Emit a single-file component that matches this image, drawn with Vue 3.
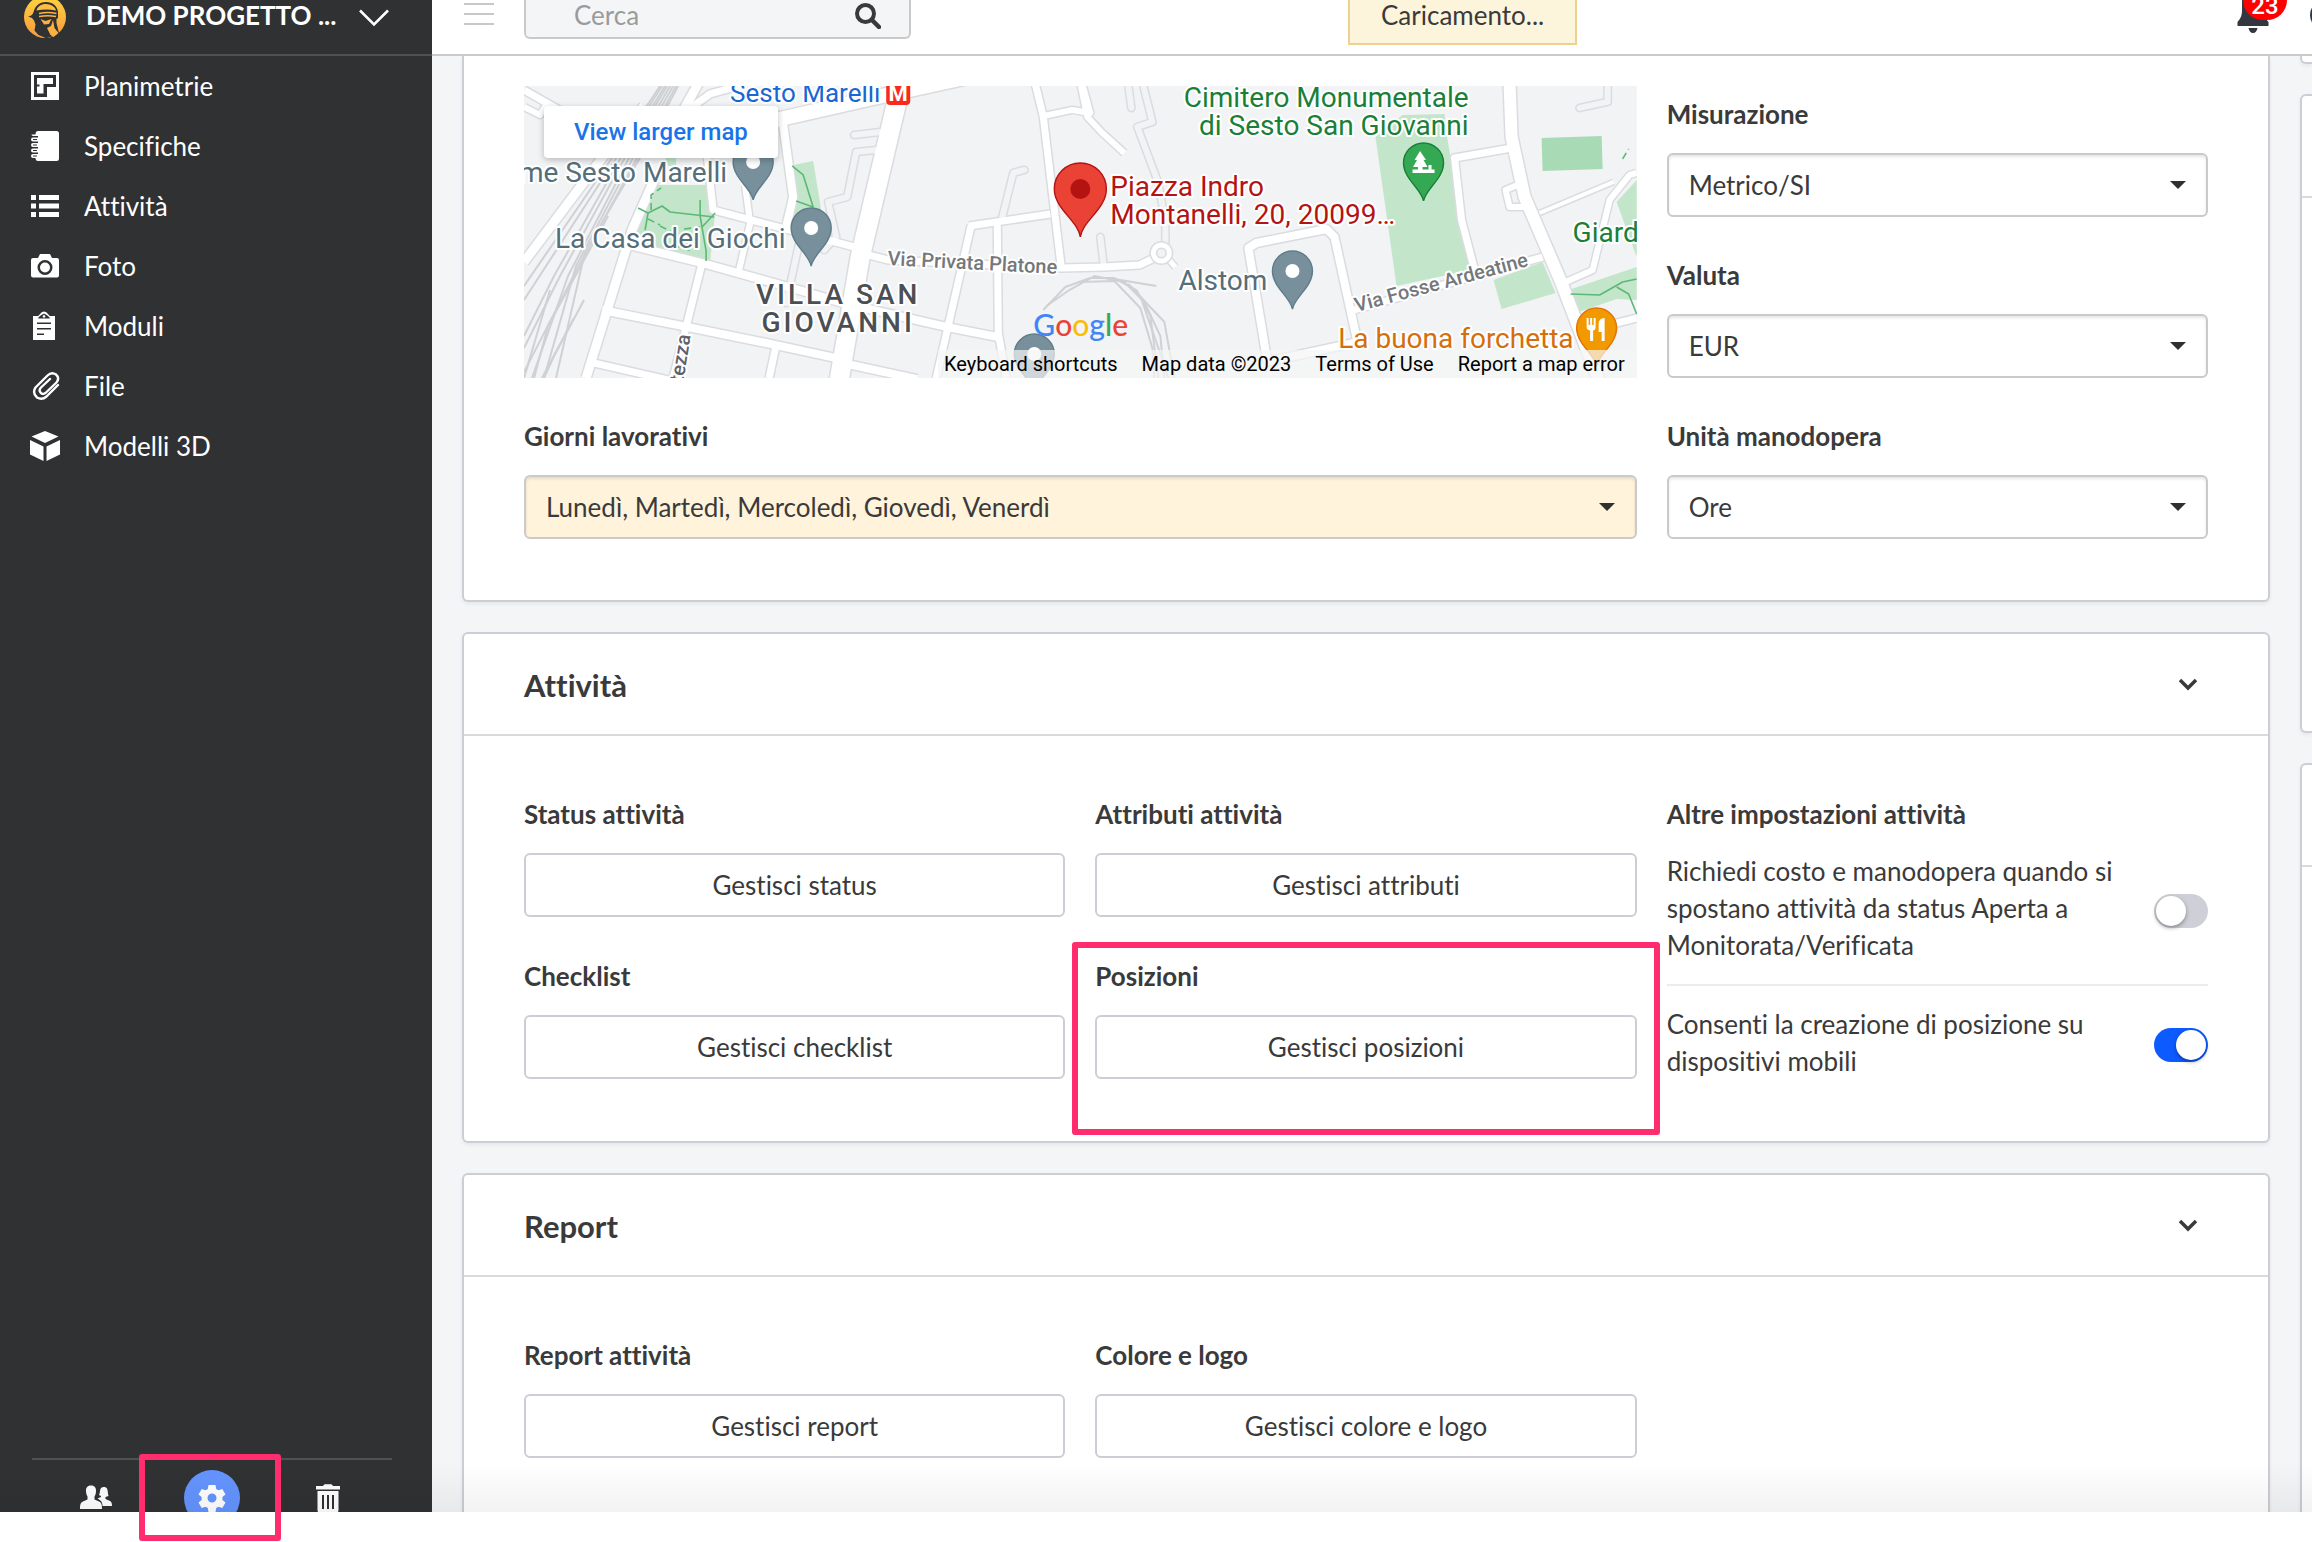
<template>
  <div class="page">
    <div class="app">
      <aside class="sidebar">
        <button class="project" type="button">
          <svg class="logo" viewBox="0 0 42 42" aria-hidden="true">
            <defs>
              <linearGradient id="logoFill" x1="0" y1="0" x2="0" y2="1">
                <stop offset="0" stop-color="#ffd33f" />
                <stop offset="1" stop-color="#f79a3e" />
              </linearGradient>
            </defs>
            <circle cx="21" cy="21" r="21" fill="url(#logoFill)" />
            <path d="M4 20.500c3-.5 5-1.500 6-6C12 9 16 6 22 6c6.500 0 11.500 4 12 10v6l-1.500 1v4l2.500 10-5 3-7 2h-1.500l-2-1-5-2-4-4.500 1-6-1.500-4-2-2.500z" fill="#303133" />
            <path d="M12.500 14.500c1-4 4.500-6.500 9.500-6.500s9.500 3 10 6.500c-6-1.200-13-1.200-19.500 0z" fill="#fdbd42" />
            <path d="M15 17.500c6-1.200 12-1.200 17.500 0M15 20.500c6-1 12-1 17 0" fill="none" stroke="#fbb540" stroke-width="1.500" />
            <path d="M16.500 23l5 2 6-2-2.500 5-5 .5zM23 32l4-2 2-6 1.500 8 4 5-5 4-3-2z" fill="#fbb040" />
          </svg>
          <span class="project-name">DEMO PROGETTO ...</span>
          <svg class="project-caret" viewBox="0 0 30 18" aria-hidden="true">
            <path d="M1 1.500L15 15.500L29 1.500" fill="none" stroke="#fff" stroke-width="2.500" />
          </svg>
        </button>

        <nav class="menu">
          <a v-for="item in menu" :key="item.label" class="menu-item" href="#">
            <svg class="menu-icon" viewBox="0 0 30 30" aria-hidden="true">
              <path v-if="item.line" :d="item.path" fill="none" stroke="#fff" stroke-width="2.400" stroke-linecap="round" stroke-linejoin="round" />
              <path v-else :d="item.path" fill="#fff" fill-rule="evenodd" />
            </svg>
            <span>{{ item.label }}</span>
          </a>
        </nav>

        <div class="tools">
          <button class="tool" type="button" aria-label="Utenti">
            <svg width="32" height="26" viewBox="0 0 32 26">
              <path d="M21 3c1.500-1.500 5-1.500 6 .5 1 2 .8 5.500 1.500 7.500l-3 1v2l4.500 2c1.500.8 2 2.500 2 5h-9.500c0-4-1.500-5.500-5-7.500l3.500-1.500v-1l-2-1c1.300-2 .7-5.500 2-7z" fill="#fff" />
              <path d="M6 5.500C6 2 8 .5 11 .5s5 1.500 5 5c0 3-.5 4.500-1.500 6v3l4.500 2c2.500 1 3 3 3 7.500H0c0-4.500.5-6.500 3-7.500l4.500-2v-3C6.500 10 6 8.500 6 5.500z" fill="#fff" />
            </svg>
          </button>
          <button class="tool tool-active" type="button" aria-label="Impostazioni">
            <svg width="28" height="28" viewBox="0 0 28 28">
              <path d="M10.500 1h7l.7 4 2.300 1.300 3.800-1.400 3.200 5.700-3.100 2.500v2.800l3.100 2.500-3.200 5.700-3.800-1.400-2.300 1.300-.7 4h-7l-.7-4-2.300-1.300-3.800 1.400-3.200-5.700 3.100-2.500v-2.800L.5 10.600l3.200-5.700 3.800 1.400L9.800 5zM14 9.500a4.500 4.500 0 1 0 0 9 4.500 4.500 0 1 0 0-9z" fill="#fff" fill-rule="evenodd" />
            </svg>
          </button>
          <button class="tool" type="button" aria-label="Cestino">
            <svg width="26" height="29" viewBox="0 0 26 29">
              <path d="M1 2h7l1.500-1.800h7L18 2h7v3.500H1zM2.500 7h21v19q0 3-3 3h-15q-3 0-3-3zM7 11v14h2V11zM12 11v14h2V11zM17 11v14h2V11z" fill="#fff" fill-rule="evenodd" />
            </svg>
          </button>
        </div>
      </aside>

      <div class="content">
        <header class="topbar">
          <button class="burger" type="button" aria-label="Menu">
            <i></i><i></i><i></i>
          </button>
          <div class="search">
            <input type="text" placeholder="Cerca" aria-label="Cerca" />
            <svg class="search-icon" viewBox="0 0 26 26" aria-hidden="true">
              <circle cx="10.500" cy="10.500" r="8.500" fill="none" stroke="#3a3a3a" stroke-width="4" />
              <path d="M17 17l7 7" stroke="#3a3a3a" stroke-width="4.500" stroke-linecap="round" />
            </svg>
          </div>
          <div class="loading">Caricamento...</div>
          <button class="bell" type="button" aria-label="Notifiche">
            <svg width="32" height="34" viewBox="0 0 32 34">
              <path d="M5 0h22v10c0 5 1 8 4.500 12v4H.5v-4C4 18 5 15 5 10zM11.500 28h9q-1 5-4.500 5t-4.500-5z" fill="#343741" />
            </svg>
            <span class="badge">23</span>
          </button>
          <span class="avatar"></span>
        </header>

        <main class="board">
          <div class="column">
            <section class="card card-cut">
              <div class="card-body">
                <div class="map">
                  <svg class="map-canvas" viewBox="0 0 1112 292" preserveAspectRatio="xMidYMid slice">
                    <rect width="1112" height="292" fill="#f1f3f4" />
                    <g fill="#c3e6cb">
                      <path v-for="d in parks" :key="d" :d="d" />
                      <path d="M1017 52L1077 50L1078 83L1018 85z" fill="#a8dab5" />
                    </g>
                    <g fill="none" stroke-linejoin="round">
                      <path v-for="d in rails" :key="d" :d="d" stroke="#cfd1d4" stroke-width="2" />
                      <path v-for="d in lanes" :key="d" :d="d" stroke="#dadce0" stroke-width="9" stroke-linecap="round" />
                      <path v-for="r in roads" :key="r.d" :d="r.d" stroke="#dadce0" :stroke-width="r.w + 3" />
                      <path v-for="d in lanes" :key="d + 'in'" :d="d" stroke="#f1f3f4" stroke-width="6" stroke-linecap="round" />
                      <path v-for="r in roads" :key="r.d + 'in'" :d="r.d" stroke="#fff" :stroke-width="r.w" />
                      <path v-for="d in trails" :key="d" :d="d" stroke="#5bb974" stroke-width="1.600" />
                      <path d="M141 98l7-14M127 124v-15l10-7M124 133l12 6M138 156l30 9M136 140l12 6M1098 73l6-10M160 143l16-2" stroke="#5bb974" stroke-width="1.600" stroke-dasharray="7 4" />
                      <circle cx="637" cy="167" r="8" stroke="#dadce0" stroke-width="8" />
                      <circle cx="637" cy="167" r="8" stroke="#fff" stroke-width="5" />
                    </g>
                    <g v-for="p in pins" :key="p.x" :transform="`translate(${p.x} ${p.y})`">
                      <path d="M0 58C-2 46-20 36-20 20a20 20 0 0 1 40 0C20 36 2 46 0 58z" :fill="p.fill" :stroke="p.edge" stroke-width="1.400" />
                      <circle v-if="p.kind === 'dot'" cx="0" cy="20" r="7" fill="#fff" />
                      <path v-if="p.kind === 'tree'" d="M-3.500 8l6 9h-2.500l4 7h-5v2.500h6V22h3v4.500h3V30H-11v-3.500h5.500V24h-5l4-7H-9z" fill="#fff" />
                      <path v-if="p.kind === 'food'" d="M-10 10h2v7h1.500v-7h2v7H-3v-7h2v9q0 3-2.500 3.500V33h-3V22.500Q-10 22-10 19zM8 10v23H5v-9H2v-8q0-6 6-6z" fill="#fff" />
                    </g>
                    <g transform="translate(556 77)">
                      <path d="M0 74C-2 58-26 46-26 26a26 26 0 0 1 52 0C26 46 2 58 0 74z" fill="#ea4335" stroke="#b31412" stroke-width="1.400" />
                      <circle cx="0" cy="26" r="10" fill="#b31412" />
                    </g>
                    <text
                      v-for="l in labels"
                      :key="l.text"
                      class="place"
                      :class="l.kind"
                      :x="l.x"
                      :y="l.y"
                      :fill="l.fill"
                      :text-anchor="l.anchor"
                      :transform="l.turn ? `rotate(${l.turn} ${l.x} ${l.y})` : undefined"
                    >{{ l.text }}</text>
                    <rect x="362" y="-5" width="24" height="24" rx="4" fill="#f72a1b" />
                    <text class="metro" x="374" y="15" text-anchor="middle">M</text>
                    <text class="google" x="509" y="250">
                      <tspan fill="#4285f4">G</tspan><tspan fill="#ea4335">o</tspan><tspan fill="#fbbc04">o</tspan><tspan fill="#4285f4">g</tspan><tspan fill="#34a853">l</tspan><tspan fill="#ea4335">e</tspan>
                    </text>
                  </svg>
                  <a class="larger" href="#">View larger map</a>
                  <div class="map-bar">
                    <button type="button">Keyboard shortcuts</button>
                    <span>Map data ©2023</span>
                    <a href="#">Terms of Use</a>
                    <a href="#">Report a map error</a>
                  </div>
                </div>

                <div class="field">
                  <label class="title" for="misurazione">Misurazione</label>
                  <div class="picker">
                    <select id="misurazione"><option>Metrico/SI</option></select>
                  </div>
                </div>
                <div class="field">
                  <label class="title" for="valuta">Valuta</label>
                  <div class="picker">
                    <select id="valuta"><option>EUR</option></select>
                  </div>
                </div>
                <div class="field days">
                  <label class="title" for="giorni">Giorni lavorativi</label>
                  <div class="picker">
                    <select id="giorni"><option>Lunedì, Martedì, Mercoledì, Giovedì, Venerdì</option></select>
                  </div>
                </div>
                <div class="field">
                  <label class="title" for="manodopera">Unità manodopera</label>
                  <div class="picker">
                    <select id="manodopera"><option>Ore</option></select>
                  </div>
                </div>
              </div>
            </section>

            <section class="card">
              <div class="card-head">
                <h2>Attività</h2>
                <button class="fold" type="button" aria-label="Chiudi Attività">
                  <svg viewBox="0 0 20 14"><path d="M2 2l8 8 8-8" fill="none" stroke="#3a3a3a" stroke-width="3.500" /></svg>
                </button>
              </div>
              <div class="card-body">
                <div v-for="f in taskFields" :key="f.title" class="field">
                  <h3 class="title">{{ f.title }}</h3>
                  <button class="manage" type="button">{{ f.action }}</button>
                  <div v-if="f.marked" class="mark mark-field"></div>
                </div>
                <div class="field options">
                  <h3 class="title">Altre impostazioni attività</h3>
                  <label class="option">
                    <span>Richiedi costo e manodopera quando si spostano attività da status Aperta a Monitorata/Verificata</span>
                    <input v-model="askCost" type="checkbox" />
                  </label>
                  <label class="option">
                    <span>Consenti la creazione di posizione su dispositivi mobili</span>
                    <input v-model="allowPosition" type="checkbox" />
                  </label>
                </div>
              </div>
            </section>

            <section class="card">
              <div class="card-head">
                <h2>Report</h2>
                <button class="fold" type="button" aria-label="Chiudi Report">
                  <svg viewBox="0 0 20 14"><path d="M2 2l8 8 8-8" fill="none" stroke="#3a3a3a" stroke-width="3.500" /></svg>
                </button>
              </div>
              <div class="card-body card-tall">
                <div v-for="f in reportFields" :key="f.title" class="field">
                  <h3 class="title">{{ f.title }}</h3>
                  <button class="manage" type="button">{{ f.action }}</button>
                </div>
              </div>
            </section>
          </div>

          <div class="column column-side">
            <section class="card side-top"></section>
            <section class="card side-mid"><div class="card-head"></div></section>
            <section class="card side-last"><div class="card-head"></div></section>
          </div>
        </main>
      </div>
      <div class="fade"></div>
    </div>
    <div class="mark mark-tool"></div>
  </div>
</template>

<script setup>
import { ref } from 'vue'

const askCost = ref(false)
const allowPosition = ref(true)

const menu = [
  { label: 'Planimetrie', path: 'M1 1h28v28H1zM4 4v22h13V16h9V4zM7 7h16v6H13.500v9.500H7v-7h2.500v-2H7z' },
  { label: 'Specifiche', path: 'M8 0h18.500Q29 0 29 2.500v25Q29 30 26.500 30H8q-2.500 0-2.500-3H3q-2-.2-2-2t2-2h5v-1.500H3q-2-.2-2-2t2-2h5V16H3q-2-.2-2-2t2-2h5v-1.500H3Q1 10.300 1 8.500t2-2h5V5H3Q1.500 4.800 1.500 3.500h4Q5.500 0 8 0zM3 8h4v1H3zM3 13.500h4v1H3zM3 19h4v1H3zM3 24.500h4v1H3z' },
  { label: 'Attività', path: 'M1 4h5v5H1zM9 4h20v5H9zM1 12.500h5v5H1zM9 12.500h20v5H9zM1 21h5v5H1zM9 21h20v5H9z' },
  { label: 'Foto', path: 'M3 7h5l2-4h10l2 4h5q2 0 2 2v15.500q0 2-2 2H3q-2 0-2-2V9q0-2 2-2zM15 9a7.500 7.500 0 1 0 0 15 7.500 7.500 0 1 0 0-15zM15 11.500a5 5 0 1 1 0 10 5 5 0 1 1 0-10z' },
  { label: 'Moduli', path: 'M3 5h5Q9 4.500 10 3q1.500-2.500 4-2.500T18 3q1 1.500 2 2h5v24H3zM8 7.500h12Q19 5 14 2.500 9 5 8 7.500zM14 3.500l1.500 2-1.500 1.500-1.500-1.500zM7 11.500v1.500h14v-1.500zM7 17v1.500h14V17zM7 22.500V24h7v-1.500z' },
  { label: 'File', line: true, path: 'M28 14L16.500 25.500Q12 29.500 7 26.500 2 22 5.500 16.500L17.500 4.500Q21.500 0.500 26 3.500 30 7 26.500 11.500L15.500 22Q12.500 24 10.500 21.500 8.500 19 11 16.500L20 8' },
  { label: 'Modelli 3D', path: 'M15 0l13.500 5.500L15 12 1.500 5.500zM0 9l13.500 6.500V30L0 23.500zM30 9l-13.500 6.500V30L30 23.500z' }
]

const taskFields = [
  { title: 'Status attività', action: 'Gestisci status' },
  { title: 'Attributi attività', action: 'Gestisci attributi' },
  { title: 'Checklist', action: 'Gestisci checklist' },
  { title: 'Posizioni', action: 'Gestisci posizioni', marked: true }
]

const reportFields = [
  { title: 'Report attività', action: 'Gestisci report' },
  { title: 'Colore e logo', action: 'Gestisci colore e logo' }
]

// Map geometry, drawn on a 1112 x 292 canvas
const parks = [
  'M127 99L182 99L191 127L186 176L130 164L108 144L114 121z',
  'M141 71H152V80H144z',
  'M269 79L289 75L297 124L282 142L266 146z',
  'M851 51L878 29L920 28L922 48L946 184L872 200z',
  'M969 194L1018 176L1031 207L977 223z',
  'M1044 204L1112 181V214L1092 213L1054 226z',
  'M1112 94L1092 116L1112 171z'
]

const rails = [
  'M141 0L100 66L30 190L0 250',
  'M143 0L104 66L36 190L0 262',
  'M146 0L108 66L44 190L8 292',
  'M149 0L111 68L52 180L20 292',
  'M152 0L114 70L60 170L32 292',
  'M154 0L117 70L70 150L0 286',
  'M138 0L96 66L0 214',
  'M136 0L92 66L0 200',
  'M84 130L24 240L10 292',
  'M60 214L30 270L20 292',
  'M50 232L18 292',
  'M26 204L0 292',
  'M519 224L541 201L566 192L590 192L612 204L626 230L634 292',
  'M522 220L545 204L570 190L600 196L620 216L636 250L640 292',
  'M556 196L590 195L616 222L628 262L630 292',
  'M590 193L632 200',
  'M604 198L640 236L650 292',
  'M618 216L634 262L644 292'
]

const lanes = [
  'M356 46L330 49',
  'M352 64L332 66L323 111L304 116L312 151L300 164',
  'M275 157L262 217',
  'M500 84L489 87L478 131',
  'M604 0L607 22',
  'M619 0L628 36L613 41L634 97L641 137L641 157',
  'M576 151L579 177',
  'M1083 0V16L1055 22'
]

const roads = [
  { w: 7, d: 'M0 4L42 28' },
  { w: 6, d: 'M0 21L16 29L23 17' },
  { w: 9, d: 'M156 30L175 -4' },
  { w: 7, d: 'M164 24L186 8L215 0' },
  { w: 9, d: 'M0 176L78 72L120 20' },
  { w: 9, d: 'M130 94L108 144L62 292' },
  { w: 7, d: 'M182 60L189 124L334 162' },
  { w: 8, d: 'M97 157L178 177L275 204L319 217L423 241L474 251' },
  { w: 7, d: 'M178 177L162 241L149 292' },
  { w: 8, d: 'M78 224L164 241L252 259L312 272' },
  { w: 7, d: 'M66 276L145 294' },
  { w: 7, d: 'M252 259L245 292' },
  { w: 8, d: 'M319 277L393 293' },
  { w: 8, d: 'M258 31L269 111L262 141' },
  { w: 6, d: 'M221 100L226 137L215 184' },
  { w: 7, d: 'M445 140L526 128' },
  { w: 7, d: 'M447 139L423 244L412 292' },
  { w: 7, d: 'M473 137L474 247L482 292' },
  { w: 7, d: 'M511 -2L519 31L537 182' },
  { w: 6, d: 'M520 30L548 24L566 27L558 -2' },
  { w: 7, d: 'M345 169L364 174L537 182L580 181L615 179L632 171' },
  { w: 6, d: 'M556 -3L563 31L578 47L600 67' },
  { w: 5, d: 'M644 173L651 181' },
  { w: 8, d: 'M743 276L724 162L732 157L802 143L810 151L833 256L741 276' },
  { w: 7, d: 'M829 224L1018 171' },
  { w: 7, d: 'M987 62L930 72L937 134L950 184' },
  { w: 6, d: 'M993 99L981 104L985 121L1000 121' },
  { w: 4, d: 'M1015 127L1089 96' },
  { w: 6, d: 'M1112 87L1105 89L1085 114L1068 184L1041 196' },
  { w: 7, d: 'M1080 240L1112 232' },
  { w: 12, d: 'M985 -2L987 51L1000 111L1037 197L1074 294' },
  { w: 14, d: 'M252 34L340 14L440 -8' },
  { w: 19, d: 'M374 10L336 171L315 294' }
]

const trails = [
  'M114 122L124 127L138 120L146 126L190 131',
  'M176 114V130L182 165V175',
  'M191 127L178 141',
  'M124 127L121 144',
  'M268 80L279 89L289 121L272 115',
  'M1046 208L1075 209L1098 196L1112 193',
  'M1092 201L1104 208L1112 228'
]

const slate = { fill: '#78909c', edge: '#5f7c8a', kind: 'dot' }
const pins = [
  { x: 229, y: 56, ...slate },
  { x: 287, y: 122, ...slate },
  { x: 510, y: 248, ...slate },
  { x: 768, y: 165, ...slate },
  { x: 899, y: 57, fill: '#34a853', edge: '#188038', kind: 'tree' },
  { x: 1072, y: 222, fill: '#f29900', edge: '#e37400', kind: 'food' }
]

const labels = [
  { text: 'Sesto Marelli', x: 206, y: 16, fill: '#1967d2', kind: 'station' },
  { text: 'me Sesto Marelli', x: 203, y: 96, fill: '#546e7a', anchor: 'end' },
  { text: 'La Casa dei Giochi', x: 31, y: 162, fill: '#546e7a' },
  { text: 'VILLA SAN', x: 314, y: 218, fill: '#4b4f54', anchor: 'middle', kind: 'district' },
  { text: 'GIOVANNI', x: 314, y: 246, fill: '#4b4f54', anchor: 'middle', kind: 'district' },
  { text: 'Via Privata Platone', x: 363, y: 179, fill: '#74787c', kind: 'street', turn: 3 },
  { text: 'Via Fosse Ardeatine', x: 832, y: 226, fill: '#74787c', kind: 'street', turn: -15 },
  { text: 'tezza', x: 159, y: 297, fill: '#5f6368', kind: 'street', turn: -81 },
  { text: 'Piazza Indro', x: 586, y: 110, fill: '#b31412' },
  { text: 'Montanelli, 20, 20099…', x: 586, y: 138, fill: '#b31412' },
  { text: 'Cimitero Monumentale', x: 944, y: 21, fill: '#188038', anchor: 'end' },
  { text: 'di Sesto San Giovanni', x: 944, y: 49, fill: '#188038', anchor: 'end' },
  { text: 'Alstom', x: 654, y: 204, fill: '#546e7a' },
  { text: 'Giard', x: 1048, y: 156, fill: '#188038' },
  { text: 'La buona forchetta', x: 1049, y: 262, fill: '#d56e0c', anchor: 'end' }
]
</script>

<style>
body {
  margin: 0;
  background: #fff;
}
</style>

<style scoped>
.page {
  position: relative;
  box-sizing: border-box;
  height: 100vh;
  padding-bottom: 30px;
  overflow: hidden;
  background: #fff;
  color: #3a3a3a;
  font-family: Lato, "Liberation Sans", sans-serif;
  font-size: 26px;
  font-variant-ligatures: none;
}

.page *,
.page *::before,
.page *::after {
  box-sizing: border-box;
}

button,
input,
select {
  margin: 0;
  padding: 0;
  border: 0;
  background: none;
  color: inherit;
  font: inherit;
  font-variant-ligatures: none;
}

h2,
h3 {
  margin: 0;
}

a {
  text-decoration: none;
}

.app {
  position: relative;
  display: flex;
  height: 100%;
  overflow: hidden;
}

/* Sidebar */
.sidebar {
  display: flex;
  flex: 0 0 432px;
  flex-direction: column;
  background: #303133;
  color: #fff;
}

.project {
  display: flex;
  flex: 0 0 56px;
  align-items: flex-start;
  padding: 0 43px 0 24px;
  border-bottom: 2px solid #505153;
  line-height: 30px;
  text-align: left;
}

.logo {
  width: 42px;
  height: 42px;
  margin-top: -4px;
}

.project-name {
  flex: 1;
  padding-left: 20px;
  font-weight: 700;
}

.project-caret {
  width: 30px;
  height: 18px;
  margin-top: 9px;
}

.menu {
  display: flex;
  flex: 1;
  flex-direction: column;
}

.menu-item {
  display: flex;
  align-items: center;
  gap: 24px;
  height: 60px;
  padding-left: 30px;
  color: #fff;
}

.menu-icon {
  width: 30px;
  height: 30px;
}

.tools {
  display: flex;
  flex: 0 0 54px;
  justify-content: space-between;
  min-height: 0;
  margin: 0 40px 0 32px;
  padding: 10px 36px 0;
  border-top: 2px solid #505153;
}

.tool {
  display: flex;
  flex: 0 0 56px;
  align-items: center;
  justify-content: center;
  width: 56px;
  height: 56px;
}

.tool-active {
  border-radius: 50%;
  background: #6494ff;
}

/* Top bar */
.content {
  display: flex;
  flex: 1;
  flex-direction: column;
  min-width: 0;
}

.topbar {
  position: relative;
  display: flex;
  flex: 0 0 56px;
  align-items: flex-start;
  padding-left: 32px;
  border-bottom: 2px solid #cacaca;
  background: #fff;
}

.burger {
  display: flex;
  flex-direction: column;
  gap: 8px;
  width: 30px;
  margin: 3px 30px 0 0;
}

.burger i {
  height: 2px;
  background: #c8c8c8;
}

.search {
  display: flex;
  align-items: flex-start;
  width: 387px;
  height: 39px;
  padding: 0 28px 0 48px;
  border: 2px solid #cacaca;
  border-top: 0;
  border-radius: 0 0 6px 6px;
  background: #f4f5f7;
}

.search input {
  flex: 1;
  min-width: 0;
  height: 30px;
}

.search input::placeholder {
  color: #9b9b9b;
}

.search-icon {
  width: 26px;
  height: 26px;
  margin-top: 3px;
}

.loading {
  position: absolute;
  top: 0;
  left: 916px;
  padding: 0 31px 13px;
  border: 2px solid #eed08f;
  border-top: 0;
  background: #fcf5dc;
  line-height: 30px;
}

.bell {
  position: relative;
  margin-left: auto;
  margin-right: 43px;
  height: 34px;
}

.bell svg {
  display: block;
}

.badge {
  position: absolute;
  bottom: 14px;
  left: 6px;
  width: 44px;
  height: 40px;
  padding-top: 12px;
  border-radius: 20px;
  background: #f00;
  color: #fff;
  font: 500 24px/28px Roboto, sans-serif;
}

.avatar {
  position: absolute;
  top: 0;
  right: -28px;
  width: 30px;
  height: 30px;
  border-radius: 50%;
  background: #343741;
}

/* Board */
.board {
  display: flex;
  flex: 1;
  gap: 30px;
  min-height: 0;
  padding-left: 30px;
  overflow: hidden;
  background: #f4f5f7;
}

.column {
  display: flex;
  flex: 1;
  flex-direction: column;
  gap: 30px;
  min-width: 0;
}

.column > .card {
  flex-shrink: 0;
}

.card {
  border: 2px solid #cdced5;
  border-radius: 6px;
  background: #fff;
  box-shadow: 0 2px 4px rgba(0, 0, 0, 0.06);
}

.card-cut {
  border-top: 0;
  border-radius: 0 0 6px 6px;
}

.card-head {
  display: flex;
  align-items: center;
  justify-content: space-between;
  height: 102px;
  padding: 2px 70px 0 60px;
  border-bottom: 2px solid #dadadc;
}

.card-head h2 {
  font-size: 31px;
  font-weight: 700;
}

.fold {
  display: flex;
  width: 20px;
}

.fold svg {
  width: 20px;
  height: 14px;
}

.card-body {
  display: grid;
  grid-template-columns: repeat(3, minmax(0, 1fr));
  gap: 40px 30px;
  align-content: start;
  padding: 59px 60px 62px;
}

.card-cut .card-body {
  row-gap: 39px;
  padding-top: 39px;
  padding-bottom: 61px;
}

.card-tall {
  padding-bottom: 160px;
}

.field {
  position: relative;
}

.title {
  display: block;
  margin-bottom: 19px;
  font-size: 26px;
  font-weight: 700;
  line-height: 39px;
}

.days {
  grid-column: 1 / 3;
}

.manage {
  width: 100%;
  height: 64px;
  border: 2px solid #cdced5;
  border-radius: 6px;
}

.picker {
  position: relative;
}

.picker::after {
  content: "";
  position: absolute;
  top: 28px;
  right: 22px;
  border: 8px solid transparent;
  border-top-color: #303030;
  border-bottom: 0;
  pointer-events: none;
}

.picker select {
  width: 100%;
  height: 64px;
  padding: 0 50px 0 20px;
  border: 2px solid #cacaca;
  border-radius: 6px;
  background: #fff;
  box-shadow: inset 0 2px 3px rgba(0, 0, 0, 0.1);
  appearance: none;
}

.days select {
  background: #fff3db;
}

.options {
  grid-row: 1 / 3;
  grid-column: 3;
  height: 284px;
}

.option {
  display: flex;
  align-items: center;
  justify-content: space-between;
  gap: 40px;
  line-height: 37px;
}

.option + .option {
  margin-top: 20px;
  padding-top: 20px;
  border-top: 2px solid #ececee;
}

.option input {
  flex: 0 0 54px;
  height: 34px;
  margin-top: 4px;
  padding: 2px;
  border-radius: 17px;
  background: #cfd0d7;
  appearance: none;
}

.option input::before {
  content: "";
  display: block;
  width: 30px;
  height: 30px;
  border-radius: 50%;
  background: #fff;
  box-shadow: 0 2px 4px rgba(0, 0, 0, 0.35);
}

.option input:checked {
  background: #0d5bff;
}

.option input:checked::before {
  margin-left: 20px;
}

/* Second column, only its left edge is in view */
.column-side {
  flex: 0 0 12px;
}

.column-side .card {
  border-right: 0;
  border-radius: 6px 0 0 6px;
}

.column-side .side-top {
  height: 8px;
  border-top: 0;
  border-radius: 0 0 0 6px;
}

.side-mid {
  height: 639px;
}

.side-last {
  height: 900px;
}

.column-side .card-head {
  padding: 0;
}

/* Map */
.map {
  position: relative;
  grid-row: 1 / 3;
  grid-column: 1 / 3;
  height: 292px;
  margin-top: -9px;
  overflow: hidden;
  font-family: Roboto, sans-serif;
}

.map-canvas {
  display: block;
  width: 100%;
  height: 100%;
}

.place {
  font-size: 28px;
  paint-order: stroke;
  stroke: #fff;
  stroke-width: 4px;
  stroke-linejoin: round;
}

.place.district {
  font-weight: 500;
  letter-spacing: 3px;
}

.place.station {
  font-size: 26px;
}

.place.street {
  font-size: 20px;
  font-weight: 500;
}

.metro {
  fill: #fff;
  font-size: 22px;
  font-weight: 700;
}

.google {
  font-family: Lato, sans-serif;
  font-size: 30px;
  font-weight: 500;
}

.larger {
  position: absolute;
  top: 20px;
  left: 20px;
  padding: 0 30px;
  border-radius: 4px;
  background: #fff;
  box-shadow: 0 2px 6px rgba(0, 0, 0, 0.25);
  color: #1a73e8;
  font-size: 24px;
  font-weight: 500;
  line-height: 52px;
}

.map-bar {
  position: absolute;
  right: 0;
  bottom: 0;
  display: flex;
  gap: 24px;
  padding: 0 12px 0 6px;
  background: rgba(245, 245, 245, 0.7);
  color: #000;
  font-size: 20px;
  line-height: 28px;
}

.map-bar a {
  color: #000;
}

/* Overlays */
.fade {
  position: absolute;
  right: 0;
  bottom: 0;
  left: 0;
  height: 50px;
  background: linear-gradient(rgba(0, 0, 0, 0), rgba(0, 0, 0, 0.05));
  pointer-events: none;
}

.mark {
  position: absolute;
  border: 6px solid #ff2d6e;
  border-radius: 3px;
  pointer-events: none;
}

.mark-field {
  top: -15px;
  right: -23px;
  bottom: -56px;
  left: -23px;
}

.mark-tool {
  bottom: 1px;
  left: 139px;
  width: 142px;
  height: 87px;
}
</style>
